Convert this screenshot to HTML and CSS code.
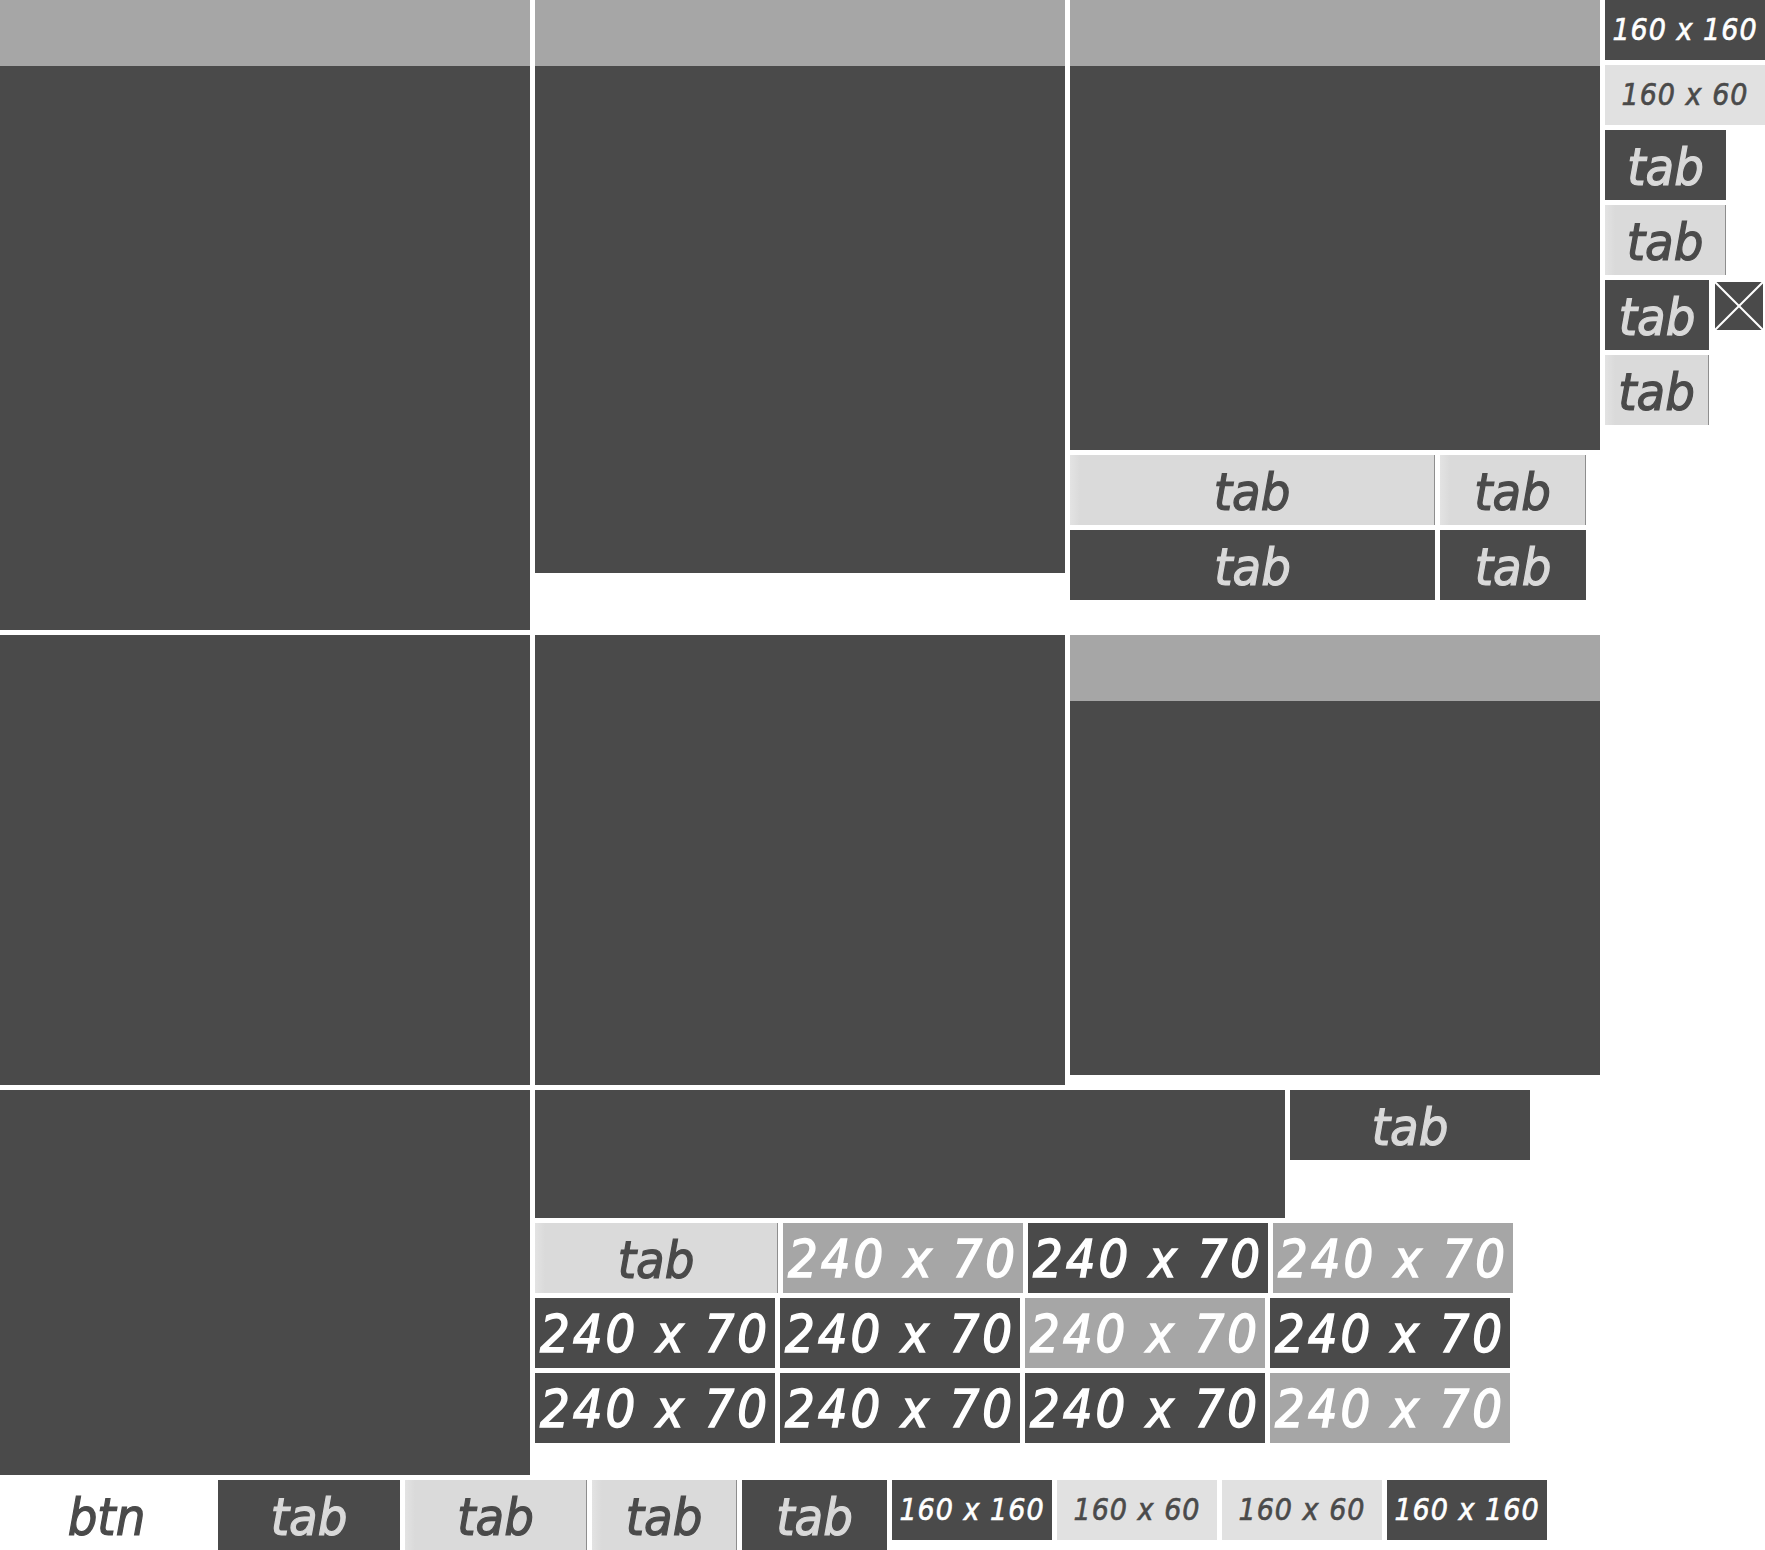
FILE: index.html
```html
<!DOCTYPE html>
<html>
<head>
<meta charset="utf-8">
<title>Atlas</title>
<link rel="stylesheet" href="styles.css">
</head>
<body>
<div class="atlas">
  <div class="panel h630"><div class="panel-head"></div></div>
  <div class="panel h573"><div class="panel-head"></div></div>
  <div class="stack">
    <div class="panel full h450"><div class="panel-head"></div></div>
    <div class="row">
      <div class="tab light w365">tab</div>
      <div class="tab light w146">tab</div>
    </div>
    <div class="row">
      <div class="tab dark w365">tab</div>
      <div class="tab dark w146">tab</div>
    </div>
  </div>
  <div class="stack">
    <div class="box dark">160 x 160</div>
    <div class="box light">160 x 60</div>
    <div class="tab dark w121">tab</div>
    <div class="tab light w121">tab</div>
    <div class="row top">
      <div class="tab dark w104">tab</div>
      <svg class="xicon" width="48" height="48" viewBox="0 0 48 48">
        <rect width="48" height="48" fill="#4a4a4a"/>
        <line x1="0" y1="0" x2="48" y2="48" stroke="#fff" stroke-width="2"/>
        <line x1="48" y1="0" x2="0" y2="48" stroke="#fff" stroke-width="2"/>
      </svg>
    </div>
    <div class="tab light w104">tab</div>
  </div>

  <div class="block h450"></div>
  <div class="block h450"></div>
  <div class="panel h440"><div class="panel-head"></div></div>
  <div></div>

  <div class="block h385"></div>
  <div class="stack span3">
    <div class="row">
      <div class="block wide"></div>
      <div class="tab dark w240">tab</div>
    </div>
    <div class="row">
      <div class="tab light w243">tab</div>
      <div class="cell gray">240 x 70</div>
      <div class="cell dark">240 x 70</div>
      <div class="cell gray">240 x 70</div>
    </div>
    <div class="row">
      <div class="cell dark">240 x 70</div>
      <div class="cell dark">240 x 70</div>
      <div class="cell gray">240 x 70</div>
      <div class="cell dark">240 x 70</div>
    </div>
    <div class="row">
      <div class="cell dark">240 x 70</div>
      <div class="cell dark">240 x 70</div>
      <div class="cell dark">240 x 70</div>
      <div class="cell gray">240 x 70</div>
    </div>
  </div>
</div>

<div class="bottom">
  <div class="btn">btn</div>
  <div class="tab dark w182">tab</div>
  <div class="tab light w182">tab</div>
  <div class="tab light w145">tab</div>
  <div class="tab dark w145">tab</div>
  <div class="box dark">160 x 160</div>
  <div class="box light">160 x 60</div>
  <div class="box light">160 x 60</div>
  <div class="box dark">160 x 160</div>
</div>
</body>
</html>
```
FILE: styles.css
```css
html, body {
  margin: 0;
  padding: 0;
  background: #ffffff;
}
body {
  width: 1765px;
  height: 1550px;
  overflow: hidden;
  font-family: "DejaVu Sans Condensed", "DejaVu Sans", sans-serif;
  font-stretch: condensed;
  font-style: italic;
}
.atlas {
  display: grid;
  grid-template-columns: 530px 530px 530px 160px;
  grid-template-rows: 630px 450px 385px;
  gap: 5px;
  align-items: start;
}
.panel {
  background: #4a4a4a;
  display: flex;
  flex-direction: column;
}
.panel.full { align-self: stretch; }
.panel-head {
  height: 66px;
  background: #a6a6a6;
}
.block { background: #4a4a4a; }
.h630 { height: 630px; }
.h573 { height: 573px; }
.h450 { height: 450px; }
.h440 { height: 440px; }
.h385 { height: 385px; }
.wide { width: 750px; height: 128px; }

.stack {
  display: flex;
  flex-direction: column;
  gap: 5px;
  align-items: flex-start;
}
.span3 { grid-column: 2 / 5; }
.row {
  display: flex;
  gap: 5px;
}
.row.top { align-items: flex-start; gap: 6px; }
.xicon { display: block; margin-top: 2px; }

.tab {
  box-sizing: border-box;
  height: 70px;
  display: flex;
  align-items: center;
  justify-content: center;
  font-size: 52px;
  line-height: 1;
  padding-top: 3px;
  -webkit-text-stroke: 1.2px currentColor;
}
.tab.dark { background: #4a4a4a; color: #d9d9d9; }
.tab.light {
  background: linear-gradient(to right, #e3e3e3 0, #dadada 10px, #dadada 100%);
  color: #4a4a4a;
  border-right: 1px solid #8e8e8e;
}
.w365 { width: 365px; }
.w146 { width: 146px; }
.w121 { width: 121px; }
.w104 { width: 104px; }
.w240 { width: 240px; }
.w243 { width: 243px; }
.w182 { width: 182px; }
.w145 { width: 145px; }

.cell {
  width: 240px;
  height: 70px;
  display: flex;
  align-items: center;
  justify-content: center;
  font-size: 52px;
  line-height: 1;
  letter-spacing: 3px;
  color: #ffffff;
  white-space: nowrap;
  padding-top: 2px;
  box-sizing: border-box;
  -webkit-text-stroke: 1.4px currentColor;
}
.cell.dark { background: #4a4a4a; }
.cell.gray { background: #a6a6a6; }

.box {
  width: 160px;
  height: 60px;
  display: flex;
  align-items: center;
  justify-content: center;
  font-size: 30px;
  line-height: 1;
  letter-spacing: 1px;
  white-space: nowrap;
  -webkit-text-stroke: 0.6px currentColor;
}
.box.dark { background: #4a4a4a; color: #ffffff; }
.box.light { background: #e1e1e1; color: #4a4a4a; }

.bottom {
  display: flex;
  gap: 5px;
  margin-top: 5px;
  align-items: flex-start;
}
.btn {
  width: 213px;
  height: 70px;
  display: flex;
  align-items: center;
  justify-content: center;
  font-size: 52px;
  line-height: 1;
  color: #4a4a4a;
  padding-top: 3px;
  box-sizing: border-box;
  -webkit-text-stroke: 1.2px currentColor;
}
```
